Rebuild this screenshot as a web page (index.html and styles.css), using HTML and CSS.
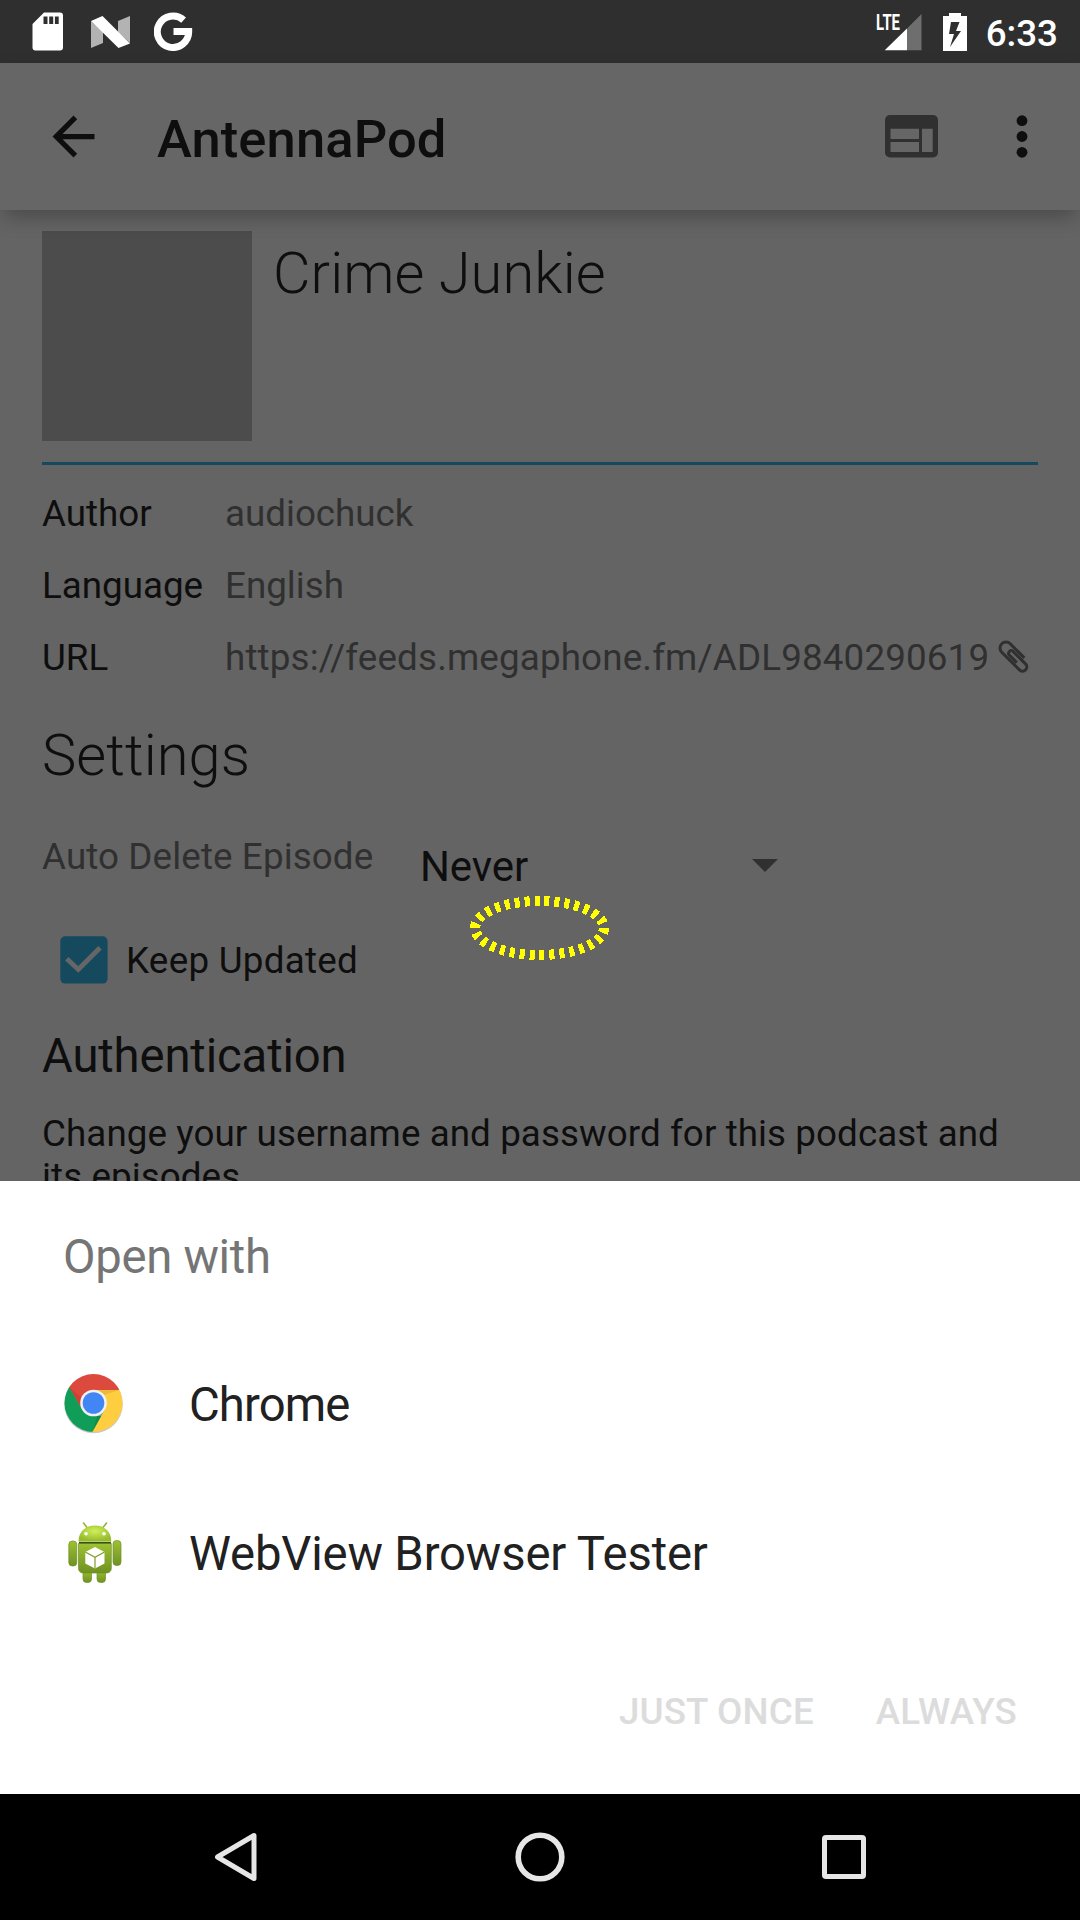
FILE: index.html
```html
<!DOCTYPE html>
<html lang="en">
<head>
<meta charset="utf-8">
<title>AntennaPod</title>
<link rel="stylesheet" href="styles.css">
</head>
<body>
<div class="screen">
  <header class="status">
    <svg class="sd" width="32" height="39" viewBox="0 0 32 39"><path fill="#fff" fill-rule="evenodd" d="M12 .5H28a3 3 0 0 1 3 3V35.500a3 3 0 0 1-3 3H3.500a3 3 0 0 1-3-3V12ZM11.500 4.500v7.500h4V4.500Zm5.700 0v7.500h4V4.500Zm5.700 0v7.500h3.800V4.500Z"/></svg>
    <svg class="nougat" width="39" height="32" viewBox="0 0 39 32"><path fill="#b3b3b3" d="M0 5 12 16V27L0 32ZM27 5 39 0V27L27 16Z"/><path fill="#fff" d="M0 5 11.500 0 39 27.500 27.500 32Z"/></svg>
    <svg class="google" width="39" height="39" viewBox="0 0 39 39"><path fill="none" stroke="#fff" stroke-width="7" d="M29.600 8.200A15.700 15.700 0 1 0 34.700 19.500H19.500"/></svg>
    <div class="status-right">
      <svg class="signal" width="46" height="38" viewBox="0 0 46 38"><path fill="#6e6e6e" d="M45.500 1V37.300H31V15.500Z"/><path fill="#fff" d="M31 15.500V37.300H8.700Z"/><text class="lte" x="0" y="17" textLength="24" lengthAdjust="spacingAndGlyphs">LTE</text></svg>
      <svg class="battery" width="24" height="38" viewBox="0 0 24 38"><path fill="#fff" fill-rule="evenodd" d="M6 0H18V3H24V38H0V3H6ZM8 9 6 21H11L7 34 18 18H13L16.500 9Z"/></svg>
      <span class="clock">6:33</span>
    </div>
  </header>

  <nav class="toolbar">
    <svg class="back" width="63" height="63" viewBox="0 0 24 24"><path fill="#0e0e0e" d="M20 11H7.830l5.590-5.590L12 4l-8 8 8 8 1.410-1.410L7.830 13H20z"/></svg>
    <h1 class="app-title">AntennaPod</h1>
    <svg class="web" width="53" height="43" viewBox="0 0 53 43"><path fill="#303030" fill-rule="evenodd" d="M5 0H48a5 5 0 0 1 5 5V37.500a5 5 0 0 1-5 5H5a5 5 0 0 1-5-5V5a5 5 0 0 1 5-5ZM5.500 13.700V24H34V13.700ZM5.500 27V37H34V27ZM37 13.700V37H47.700V13.700Z"/></svg>
    <svg class="more" width="12" height="43" viewBox="0 0 12 43"><g fill="#0e0e0e"><circle cx="6" cy="5.700" r="5.400"/><circle cx="6" cy="21.500" r="5.400"/><circle cx="6" cy="37.300" r="5.400"/></g></svg>
  </nav>

  <main class="content">
    <section class="feed">
      <div class="cover"></div>
      <h2 class="display">Crime Junkie</h2>
    </section>
    <dl class="details">
      <dt>Author</dt><dd>audiochuck</dd>
      <dt>Language</dt><dd>English</dd>
      <dt>URL</dt>
      <dd class="url"><span>https://feeds.megaphone.fm/ADL9840290619</span>
        <svg class="clip" width="31" height="34" viewBox="0 0 31 34"><path transform="translate(8 8) rotate(45)" fill="none" stroke="#303030" stroke-width="3" d="M20 -6H0A6 6 0 0 0 0 6H25A4.300 4.300 0 0 0 25 -2.600H7A2.700 2.700 0 0 0 7 2.700H18"/></svg>
      </dd>
    </dl>
    <h2 class="display settings">Settings</h2>
    <div class="option">
      <span class="option-label">Auto Delete Episode</span>
      <span class="option-value">Never</span>
      <svg class="caret" width="26" height="13" viewBox="0 0 26 13"><path fill="#303030" d="M0 0H26L13 13Z"/></svg>
    </div>
    <div class="check-row">
      <svg width="48" height="48" viewBox="0 0 48 48"><rect x=".3" y=".3" width="47.300" height="47.300" rx="5" fill="#154a5e"/><path fill="none" stroke="#666" stroke-width="4.800" d="M6.800 22.700 18.300 33.500 40 11.700"/></svg>
      <span>Keep Updated</span>
    </div>
    <h3 class="auth">Authentication</h3>
    <p class="note">Change your username and password for this podcast and its episodes.</p>
  </main>

  <section class="sheet">
    <h2 class="sheet-title">Open with</h2>
    <div class="app">
      <svg class="chrome" width="63" height="63" viewBox="0 0 63 63">
        <defs><clipPath id="disc"><circle cx="31.500" cy="31" r="29"/></clipPath></defs>
        <circle cx="31.500" cy="32" r="29.300" fill="#c9c9c9"/>
        <g clip-path="url(#disc)">
          <path fill="#db4a3c" d="M0 0H63V18H31.500L20 37.500 5 12Z"/>
          <path fill="#0f9d58" d="M0 5 7.500 15.500 20.200 37.500 31.500 44H42L30.500 63H0Z"/>
          <path fill="#ffcd40" d="M31.500 18H63V63H28.500L42.800 37.500Z"/>
          <path fill="#c53a2d" opacity=".55" d="M7.500 15.500 19.500 25.500 20.200 37.500Z"/>
          <path fill="#d9a62f" opacity=".5" d="M36 18H57L42 23Z"/>
          <path fill="#087b40" opacity=".5" d="M42.800 37.500 30.500 60 36 42Z"/>
        </g>
        <circle cx="31.500" cy="31" r="13.300" fill="#f1f1f1"/><circle cx="31.500" cy="31" r="10.800" fill="#4285f4"/>
      </svg>
      <span class="app-chrome">Chrome</span>
    </div>
    <div class="app">
      <svg width="63" height="63" viewBox="0 0 63 63">
        <defs>
          <radialGradient id="head" cx=".5" cy=".35" r=".6"><stop offset="0" stop-color="#d0ee5b"/><stop offset="1" stop-color="#97bd2c"/></radialGradient>
          <linearGradient id="torso" x1="0" y1="0" x2="0" y2="1"><stop offset="0" stop-color="#9dc231"/><stop offset="1" stop-color="#6f9123"/></linearGradient>
        </defs>
        <path stroke="#92b536" stroke-width="1.600" stroke-linecap="round" d="M21.500 2 25 6.500M44.500 2 41 6.500"/>
        <g fill="url(#torso)" stroke="#6f8f25" stroke-width=".7">
          <rect x="21" y="49" width="8.500" height="12.500" rx="3.500"/><rect x="35" y="49" width="8.500" height="12.500" rx="3.500"/>
          <rect x="6.800" y="20" width="8" height="25" rx="3.500"/><rect x="51" y="19.500" width="8" height="25" rx="3.500"/>
          <path d="M16.500 22.500H49.300V47.500a4.500 4.500 0 0 1-4.500 4.500H21a4.500 4.500 0 0 1-4.500-4.500Z"/>
        </g>
        <path fill="#3c5213" d="M17 20.800H49V22.500H17Z"/>
        <path fill="url(#head)" d="M16.500 20.500C16.500 10.500 23.500 4.500 33 4.500S49.300 10.500 49.300 20.500Z"/>
        <circle cx="24" cy="12.800" r="1.800" fill="#fff"/><circle cx="42" cy="12.800" r="1.800" fill="#fff"/>
        <path fill="#fff" d="M33 26 42.500 31V42.500L33 47.500 23.300 42.500V31Z"/>
        <path fill="none" stroke="#7c9e2b" stroke-width="1.200" d="M23.300 31 33 36.300 42.500 31M33 36.300V47.500"/>
      </svg>
      <span>WebView Browser Tester</span>
    </div>
    <div class="actions"><span>JUST ONCE</span><span>ALWAYS</span></div>
  </section>

  <footer class="navbar">
    <svg width="44" height="50" viewBox="0 0 44 50"><path fill="none" stroke="#e6e6e6" stroke-width="5" stroke-linejoin="round" d="M40 3.500V46.500L3.500 25Z"/></svg>
    <svg width="50" height="50" viewBox="0 0 50 50"><circle cx="25" cy="25" r="21.800" fill="none" stroke="#e6e6e6" stroke-width="5.600"/></svg>
    <svg width="44" height="44" viewBox="0 0 44 44"><rect x="2.500" y="2.500" width="39" height="39" rx="1.500" fill="none" stroke="#e6e6e6" stroke-width="5"/></svg>
  </footer>

  <svg class="marker" width="140" height="66" viewBox="0 0 140 66"><ellipse cx="69.500" cy="33" rx="64.500" ry="27" pathLength="300" fill="none" stroke="#ff0" stroke-width="10" stroke-dasharray="5 5" shape-rendering="crispEdges"/></svg>
</div>
</body>
</html>
```
FILE: styles.css
```css
* { box-sizing: border-box; margin: 0; padding: 0; }
body { font-family: Roboto, "Noto Sans", sans-serif; background: #000; }
svg { display: block; flex: none; }
h1, h2, h3 { font-weight: 400; }

.screen {
  position: relative;
  display: flex;
  flex-direction: column;
  width: 1080px;
  height: 1920px;
  overflow: hidden;
  color: #0e0e0e;
  font-size: 36.75px;
  line-height: 43px;
}

.status {
  display: flex;
  align-items: center;
  height: 63px;
  padding: 0 22px 0 32px;
  background: #2f2f2f;
}
.nougat { margin-left: 27px; }
.google { margin-left: 24px; }
.status-right { display: flex; align-items: center; margin-left: auto; }
.signal { overflow: visible; }
.battery { margin-left: 21px; }
.lte { fill: #fff; font-size: 22px; font-weight: 700; }
.clock { margin: 3px 0 0 19px; color: #fff; font-weight: 500; }

.toolbar {
  z-index: 1;
  display: flex;
  align-items: center;
  height: 147px;
  padding: 0 52px 0 42px;
  background: #666;
  box-shadow: 0 9px 20px -3px rgba(0, 0, 0, .28);
}
.app-title { margin: 4px auto 0 52px; font-size: 52.5px; line-height: 62px; font-weight: 500; letter-spacing: .1px; }
.web { margin-right: 78px; margin-top: -1px; }

.content {
  height: 971px;
  padding: 21px 42px 0;
  overflow: hidden;
  background: #646464;
}
.feed {
  display: flex;
  gap: 21px;
  padding-bottom: 21px;
  border-bottom: 3px solid #154a5e;
}
.cover { width: 210px; height: 210px; background: #4c4c4c; }
.display { font-size: 57.75px; line-height: 68px; font-weight: 300; letter-spacing: .1px; }
.feed .display { margin-top: 8px; }

.details {
  display: grid;
  grid-template-columns: 183px 1fr;
  grid-auto-rows: 72px;
  align-items: center;
  margin-top: 12px;
}
.details dd { color: #303030; }
.details .url { display: flex; align-items: center; gap: 9px; white-space: nowrap; letter-spacing: .155px; }
.settings { margin-top: 28px; }

.option { display: flex; height: 135px; }
.option-label { width: 378px; margin-top: 46px; color: #303030; letter-spacing: .12px; }
.option-value { width: 332px; margin-top: 53px; font-size: 42px; line-height: 50px; letter-spacing: -.1px; }
.caret { margin-top: 70px; }

.check-row { display: flex; align-items: center; gap: 18px; height: 72px; padding-left: 18px; letter-spacing: .28px; }
.auth { margin-top: 33px; font-size: 47.25px; line-height: 55px; letter-spacing: -.15px; }
.note { margin-top: 28px; letter-spacing: .085px; }

.sheet {
  height: 613px;
  padding: 49px 63px 0 62px;
  background: #fff;
  color: #212121;
}
.sheet-title { color: #757575; font-size: 47.25px; line-height: 55px; margin: 0 0 46px 1px; letter-spacing: -.3px; }
.app { display: flex; align-items: center; gap: 64px; height: 149px; font-size: 47.25px; line-height: 55px; letter-spacing: -.16px; }
.app svg { margin-top: -4px; }
.app-chrome { letter-spacing: -.9px; }
.actions {
  display: flex;
  justify-content: flex-end;
  gap: 62px;
  margin-top: 61px;
  color: #dcdcdc;
  font-weight: 500;
  letter-spacing: .15px;
}

.navbar {
  display: flex;
  align-items: center;
  justify-content: space-between;
  height: 126px;
  padding: 0 214px;
  background: #000;
}

.marker { position: absolute; left: 470px; top: 895px; }
```
